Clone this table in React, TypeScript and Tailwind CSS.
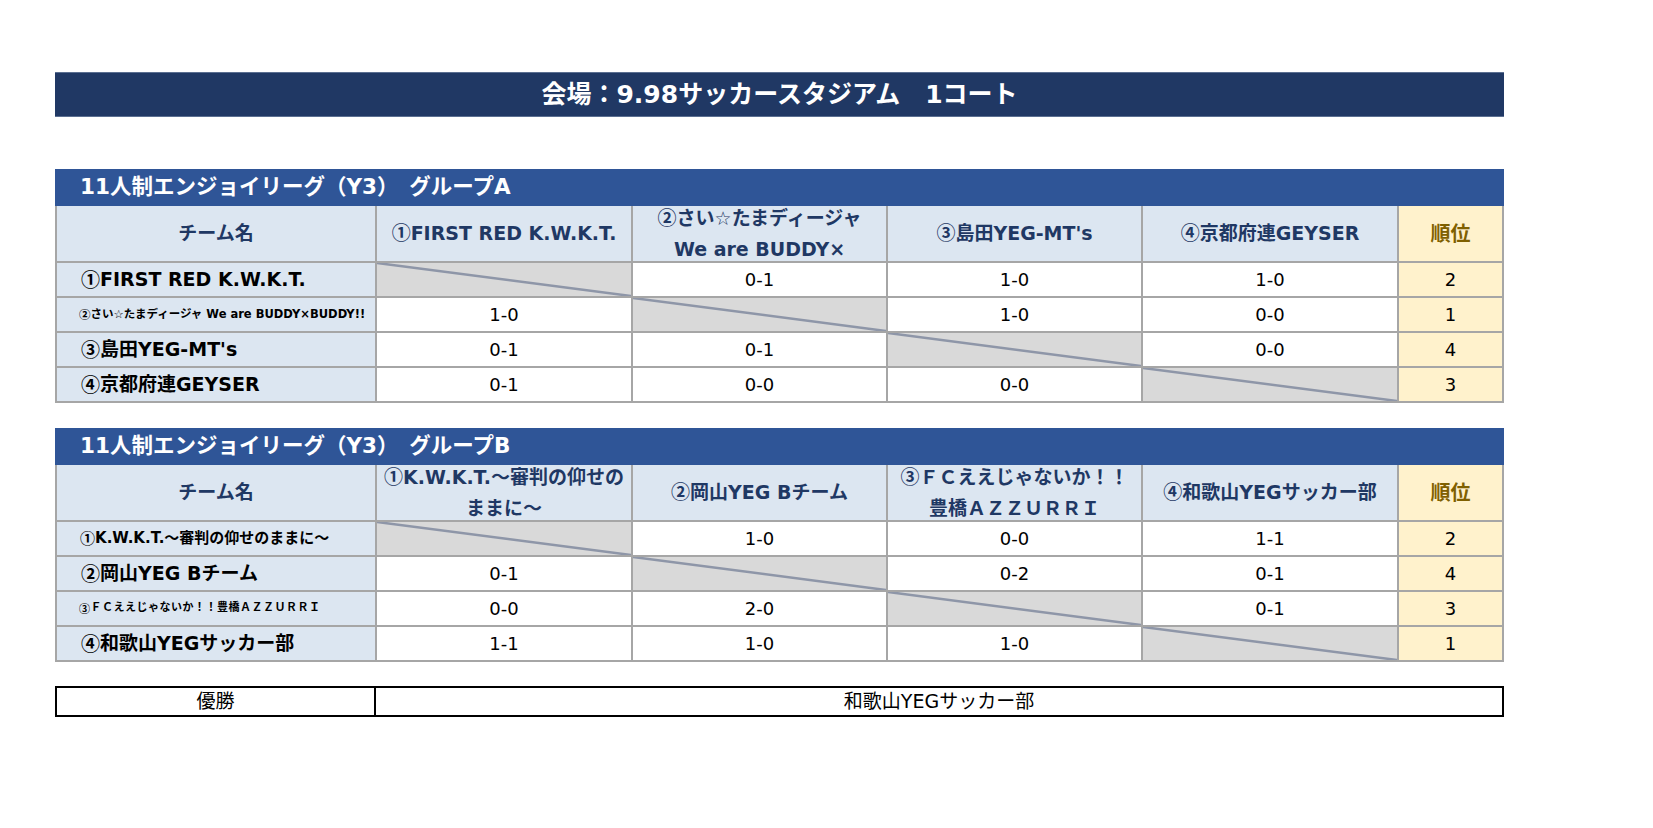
const FONT = "font-['DejaVu_Sans',_'Noto_Sans_CJK_JP',_sans-serif]";

type Group = {
  title: string;
  headers: string[][];
  rows: { name: string; size: "lg" | "md" | "sm" | "xs"; scores: string[]; rank: string }[];
};

const GROUPS: Group[] = [
  {
    title: "11人制エンジョイリーグ（Y3）　グループA",
    headers: [
      ["①FIRST RED K.W.K.T."],
      ["②さい☆たまディージャ", "We are BUDDY×"],
      ["③島田YEG-MT's"],
      ["④京都府連GEYSER"],
    ],
    rows: [
      { name: "①FIRST RED K.W.K.T.", size: "lg", scores: ["", "0-1", "1-0", "1-0"], rank: "2" },
      { name: "②さい☆たまディージャ We are BUDDY×BUDDY!!", size: "sm", scores: ["1-0", "", "1-0", "0-0"], rank: "1" },
      { name: "③島田YEG-MT's", size: "lg", scores: ["0-1", "0-1", "", "0-0"], rank: "4" },
      { name: "④京都府連GEYSER", size: "lg", scores: ["0-1", "0-0", "0-0", ""], rank: "3" },
    ],
  },
  {
    title: "11人制エンジョイリーグ（Y3）　グループB",
    headers: [
      ["①K.W.K.T.～審判の仰せの", "ままに～"],
      ["②岡山YEG Bチーム"],
      ["③ＦＣええじゃないか！！", "豊橋ＡＺＺＵＲＲＩ"],
      ["④和歌山YEGサッカー部"],
    ],
    rows: [
      { name: "①K.W.K.T.～審判の仰せのままに～", size: "md", scores: ["", "1-0", "0-0", "1-1"], rank: "2" },
      { name: "②岡山YEG Bチーム", size: "lg", scores: ["0-1", "", "0-2", "0-1"], rank: "4" },
      { name: "③ＦＣええじゃないか！！豊橋ＡＺＺＵＲＲＩ", size: "xs", scores: ["0-0", "2-0", "", "0-1"], rank: "3" },
      { name: "④和歌山YEGサッカー部", size: "lg", scores: ["1-1", "1-0", "1-0", ""], rank: "1" },
    ],
  },
];

const nameSize = {
  lg: "text-[19px] font-bold pl-[24px]",
  md: "text-[15px] font-bold pl-[23px]",
  sm: "text-[11.5px] font-bold pl-[22px]",
  xs: "text-[11px] font-bold pl-[22px] tracking-[0.5px]",
};

// circled numbers look too small in DejaVu, so take them from the CJK font
function Label({ text }: { text: string }) {
  const parts = text.split(/([①②③④])/);
  return (
    <>
      {parts.map((p, i) =>
        /[①②③④]/.test(p) ? (
          <span key={i} className="font-['Noto_Sans_CJK_JP',_sans-serif]">
            {p}
          </span>
        ) : (
          p
        )
      )}
    </>
  );
}

function Diagonal() {
  return (
    <div className="relative bg-[#d9d9d9]">
      <svg className="absolute inset-0 w-full h-full" viewBox="0 0 100 100" preserveAspectRatio="none">
        <line x1="0" y1="0" x2="100" y2="100" stroke="#8e96a8" strokeWidth="2.5" vectorEffect="non-scaling-stroke" />
      </svg>
    </div>
  );
}

function GroupTable({ group }: { group: Group }) {
  return (
    <div>
      <div className="h-[37px] bg-[#2f5597] flex items-center pl-[25px] text-white text-[21.5px] font-bold">
        {group.title}
      </div>
      <div className="grid grid-cols-[318px_254px_253px_253px_254px_103px] grid-rows-[55px_repeat(4,33px)] bg-[#a6a6a6] gap-[2px] p-[2px] pt-0">
        <div className="bg-[#dce6f1] flex items-center justify-center text-[19px] font-bold text-[#1f3864]">
          チーム名
        </div>
        {group.headers.map((lines, i) => (
          <div
            key={i}
            className="bg-[#dce6f1] flex flex-col items-center justify-center text-[19px] font-bold text-[#1f3864] leading-[31px] pb-[2px]"
          >
            {lines.map((l) => (
              <span key={l}>
                <Label text={l} />
              </span>
            ))}
          </div>
        ))}
        <div className="bg-[#fff2cc] flex items-center justify-center text-[20px] font-bold text-[#7f6000]">
          順位
        </div>
        {group.rows.map((row) => (
          <>
            <div key={row.name} className={`bg-[#dce6f1] flex items-center text-black whitespace-nowrap ${nameSize[row.size]}`}>
              <Label text={row.name} />
            </div>
            {row.scores.map((s, j) =>
              s === "" ? (
                <Diagonal key={j} />
              ) : (
                <div key={j} className="bg-white flex items-center justify-center text-[18px] text-black">
                  {s}
                </div>
              )
            )}
            <div className="bg-[#fff2cc] flex items-center justify-center text-[18px] text-black">{row.rank}</div>
          </>
        ))}
      </div>
    </div>
  );
}

export default function App() {
  return (
    <div className={`${FONT} w-[1653px] h-[828px] bg-white pt-[72px] pl-[55px]`}>
      <div className="w-[1449px]">
        <div className="h-[45px] bg-[#203864] border-y border-[#5b6f91] flex items-center justify-center text-white text-[25px] font-bold">
          会場：9.98サッカースタジアム　1コート
        </div>
        <div className="mt-[52px] flex flex-col gap-[25px]">
          {GROUPS.map((g) => (
            <GroupTable key={g.title} group={g} />
          ))}
        </div>
        <div className="mt-[24px] h-[31px] border-2 border-black flex text-[19px] text-black">
          <div className="w-[319px] border-r-2 border-black flex items-center justify-center">優勝</div>
          <div className="flex-1 flex items-center justify-center">和歌山YEGサッカー部</div>
        </div>
      </div>
    </div>
  );
}
